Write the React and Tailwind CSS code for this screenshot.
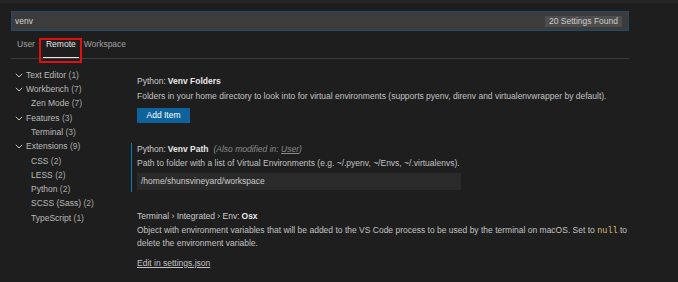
import React from "react";

const font = { fontFamily: '"Liberation Sans", Arial, sans-serif' };

function Chevron() {
  return (
    <svg width="8" height="5" viewBox="0 0 8 5" className="shrink-0">
      <path d="M0.8 0.8 L4 4 L7.2 0.8" fill="none" stroke="#c5c5c5" strokeWidth="1" />
    </svg>
  );
}

const tree = [
  { label: "Text Editor", count: 1, parent: true },
  { label: "Workbench", count: 7, parent: true },
  { label: "Zen Mode", count: 7 },
  { label: "Features", count: 3, parent: true },
  { label: "Terminal", count: 3 },
  { label: "Extensions", count: 9, parent: true },
  { label: "CSS", count: 2 },
  { label: "LESS", count: 2 },
  { label: "Python", count: 2 },
  { label: "SCSS (Sass)", count: 2 },
  { label: "TypeScript", count: 1 },
];

export default function App() {
  return (
    <div
      className="w-[678px] h-[282px] bg-[#1e1e1e] text-[#cccccc] text-[8.5px] overflow-hidden flex flex-col"
      style={font}
    >
      <div className="h-[3px] bg-[#252526] shrink-0" />
      <div className="pl-[11px] w-[629px] flex flex-col">
        {/* search */}
        <div className="mt-[8px] h-[20px] bg-[#3c3c3c] border border-[#1a4c6e] flex items-center pl-[3px] pr-[6px]">
          <span className="text-[#d4d4d4]">venv</span>
          <span className="ml-auto h-[11px] px-[4px] bg-[#4d4d4d] text-[#cccccc] flex items-center leading-none">
            20 Settings Found
          </span>
        </div>
        {/* tabs */}
        <div className="h-[28px] border-b border-[#3c3c3c] flex items-end">
          <div className="flex items-center h-[27px] pl-[6px]">
            <span className="text-[#a0a0a0]">User</span>
          </div>
          <div className="relative ml-[8px] h-[27px] px-[3px] flex items-center border-b border-[#e7e7e7]">
            <span className="text-[#e7e7e7]">Remote</span>
            <div className="absolute left-[-4px] right-[-3px] top-[7px] h-[25px] border-2 border-[#e10f0f]" />
          </div>
          <div className="ml-[5px] flex items-center h-[27px]">
            <span className="text-[#a0a0a0]">Workspace</span>
          </div>
        </div>
        {/* body */}
        <div className="flex">
          <div className="w-[120px] pt-[9px] flex flex-col shrink-0">
            {tree.map((t) => (
              <div key={t.label} className="h-[14.3px] flex items-center">
                {t.parent ? (
                  <>
                    <span className="w-[4px]" />
                    <Chevron />
                    <span className="ml-[3px] text-[#bbbbbb] whitespace-nowrap">
                      {t.label} <span className="text-[#a8a8a8]">({t.count})</span>
                    </span>
                  </>
                ) : (
                  <span className="ml-[20px] text-[#bbbbbb] whitespace-nowrap">
                    {t.label} <span className="text-[#a8a8a8]">({t.count})</span>
                  </span>
                )}
              </div>
            ))}
          </div>
          <div className="flex-1 flex flex-col pt-[15.5px]">
            {/* block 1 */}
            <div className="border-l border-transparent pl-[5px] flex flex-col">
              <div className="h-[13px] flex items-center whitespace-nowrap">
                <span className="text-[#cccccc]">Python: </span>
                <span className="font-bold text-[#e7e7e7] ml-[2px]">Venv Folders</span>
              </div>
              <div className="mt-[2px] h-[13px] flex items-center whitespace-nowrap text-[#c2c2c2]">
                Folders in your home directory to look into for virtual environments (supports pyenv, direnv and virtualenvwrapper by default).
              </div>
              <div className="mt-[5.5px] h-[15px] w-[53px] bg-[#0e639c] text-white flex items-center justify-center">
                Add Item
              </div>
            </div>
            {/* block 2 */}
            <div className="mt-[20px] border-l border-[#0c7bb3] pl-[5px] pb-[2px] flex flex-col">
              <div className="h-[13px] flex items-center whitespace-nowrap">
                <span className="text-[#cccccc]">Python: </span>
                <span className="font-bold text-[#e7e7e7] ml-[2px]">Venv Path</span>
                <span className="ml-[5px] italic text-[#8b8b8b]">
                  (Also modified in: <span className="underline">User</span>)
                </span>
              </div>
              <div className="mt-[1px] h-[13px] flex items-center whitespace-nowrap text-[#c2c2c2]">
                Path to folder with a list of Virtual Environments (e.g. ~/.pyenv, ~/Envs, ~/.virtualenvs).
              </div>
              <div className="mt-[3px] h-[17px] w-[324px] bg-[#2a2a2a] flex items-center pl-[4px] text-[#cccccc]">
                /home/shunsvineyard/workspace
              </div>
            </div>
            {/* block 3 */}
            <div className="mt-[17.5px] border-l border-transparent pl-[5px] flex flex-col">
              <div className="h-[13px] flex items-center whitespace-nowrap">
                <span className="text-[#cccccc]">Terminal › Integrated › Env: </span>
                <span className="font-bold text-[#e7e7e7] ml-[2px]">Osx</span>
              </div>
              <div className="mt-[1px] leading-[12.5px] text-[#c2c2c2]">
                <div className="whitespace-nowrap">
                  Object with environment variables that will be added to the VS Code process to be used by the terminal on macOS. Set to{" "}
                  <span className="text-[#d7ba7d]" style={{ fontFamily: '"Liberation Mono", monospace' }}>null</span> to
                </div>
                <div className="whitespace-nowrap">delete the environment variable.</div>
              </div>
              <div className="mt-[7px] h-[13px] flex items-center">
                <span className="underline text-[#c2c2c2]">Edit in settings.json</span>
              </div>
            </div>
          </div>
        </div>
      </div>
    </div>
  );
}
